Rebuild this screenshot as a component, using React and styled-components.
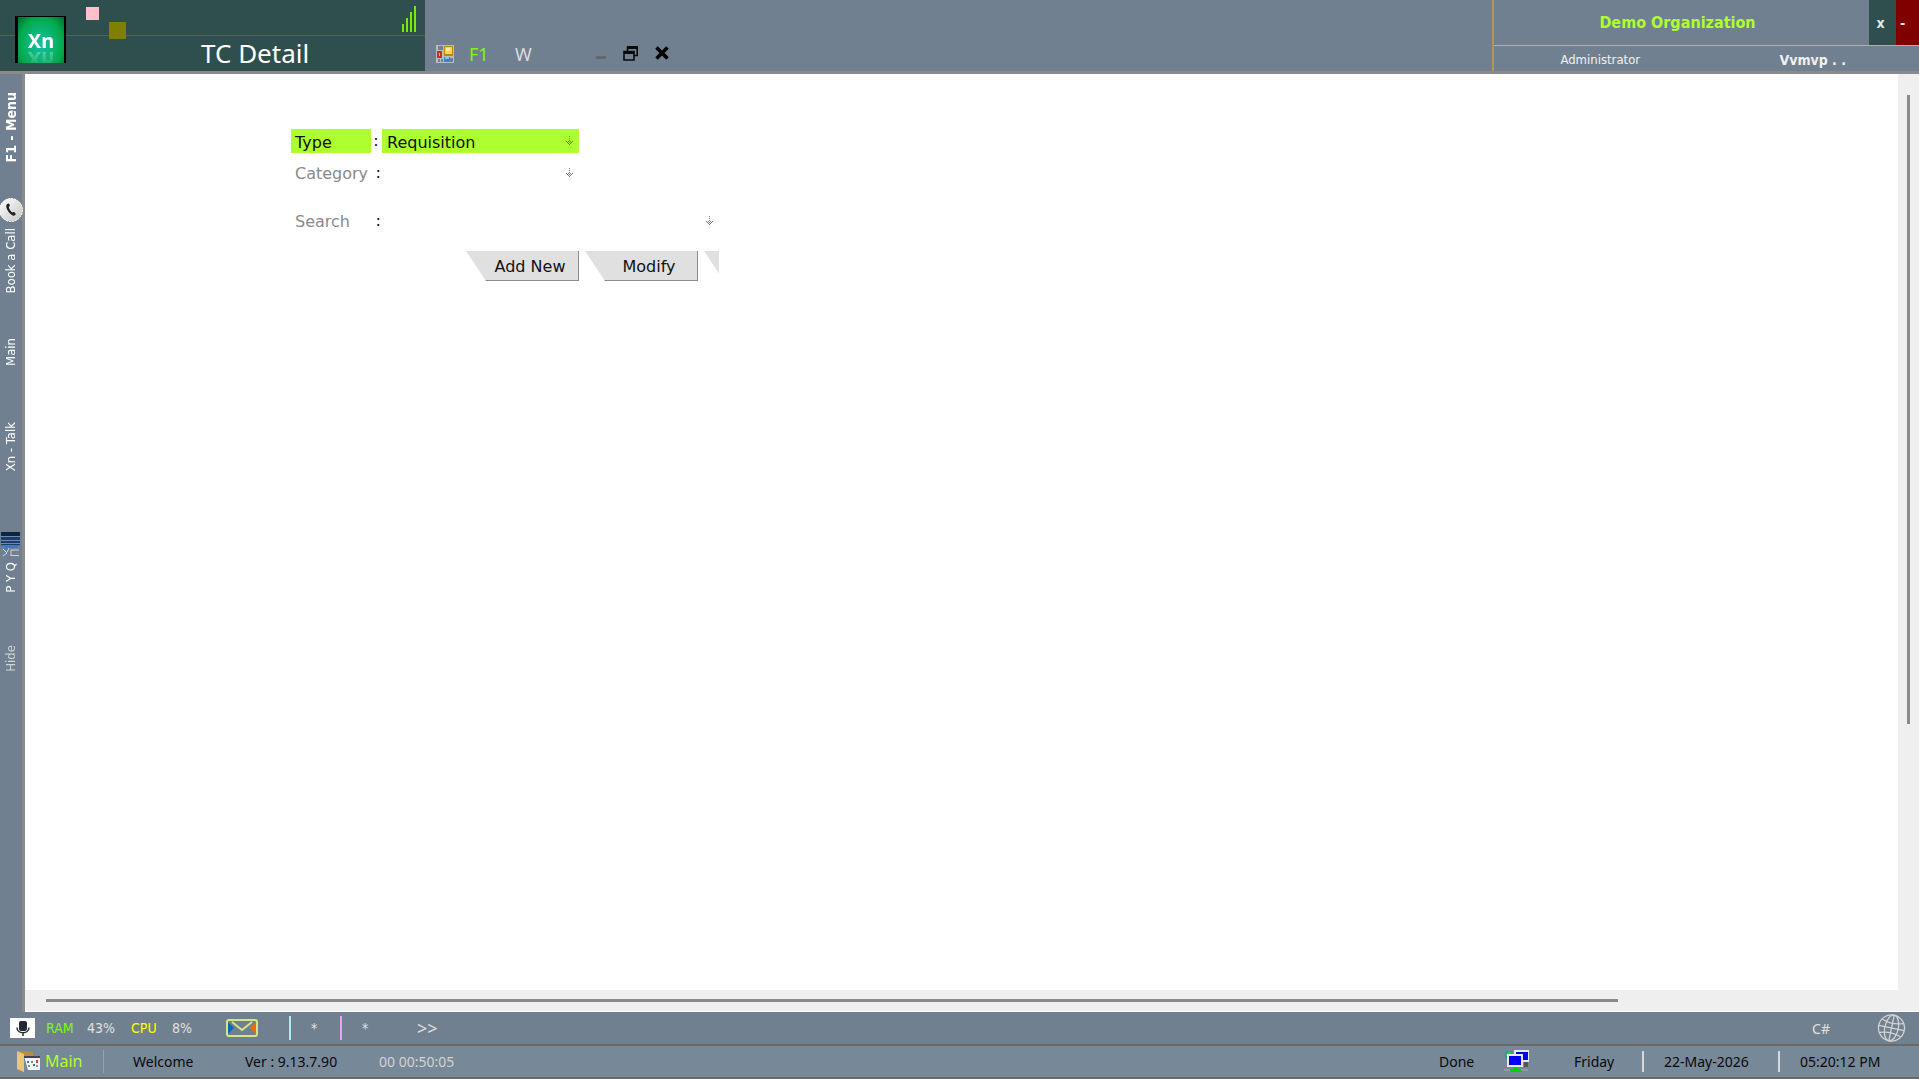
import { useState } from "react";
import styled, { createGlobalStyle, css } from "styled-components";

const UI = `"DejaVu Sans Condensed", "DejaVu Sans", sans-serif`;
const WIDE = `"DejaVu Sans", sans-serif`;
const SOFT = `"Noto Sans", "Open Sans", sans-serif`;

function Arrow() {
	return (
		<svg width='7' height='10' viewBox='0 0 7 10' fill='#777' shapeRendering='crispEdges' aria-hidden='true'>
			<path d='M3 0h1v1H3zM3 2h1v1H3zM3 4h1v1H3zM0 5h1v1H0zM2 5h1v1H2zM4 5h1v1H4zM6 5h1v1H6zM1 6h1v1H1zM3 6h1v1H3zM5 6h1v1H5zM2 7h1v1H2zM4 7h1v1H4zM3 8h1v1H3z' />
		</svg>
	);
}

function Squares() {
	return (
		<svg width='42' height='34' viewBox='0 0 42 34' aria-hidden='true'>
			<rect x='0' y='0' width='13' height='13' fill='#ffc0cb' />
			<rect x='23' y='15' width='17' height='17' fill='#808000' />
		</svg>
	);
}

function Signal() {
	return (
		<svg width='14' height='26' viewBox='0 0 14 26' fill='#7cfc00' aria-hidden='true'>
			<path d='M0 18h2v8H0zM4 12h2v14H4zM8 6h2v20H8zM12 0h2v26h-2z' opacity='0.9' />
		</svg>
	);
}

function FormIcon() {
	return (
		<svg width='18' height='18' viewBox='0 0 18 18' aria-hidden='true'>
			<rect width='18' height='18' fill='#b9bcc0' />
			<path d='M2 1h5v4H2zM2 14h2v3H2zM5 14h2v3H5zM14 13h3v4h-3z' fill='#708090' />
			<rect x='1' y='6' width='5' height='7' fill='#c32f26' />
			<rect x='3' y='8' width='1' height='3' fill='#f6b3a5' />
			<rect x='8' y='1' width='9' height='10' fill='#b88900' />
			<rect x='9' y='2' width='7' height='7' fill='#ffd34d' />
			<rect x='10' y='3' width='4' height='3' fill='#ffeaa0' />
			<rect x='8' y='12' width='6' height='5' fill='#3b7de0' />
			<rect x='9' y='12' width='4' height='2' fill='#90bcf8' />
		</svg>
	);
}

function RestoreIcon() {
	return (
		<svg width='15' height='15' viewBox='0 0 15 15' fill='none' stroke='#0a0a0a' strokeWidth='1.6' aria-hidden='true'>
			<path d='M4.500 5V1.500h9.700v8H11' />
			<path d='M4 1.500h11M1 6.500h10.500' strokeWidth='3' />
			<path d='M1 5.500h10v8.500H1z' />
		</svg>
	);
}

function CrossIcon() {
	return (
		<svg width='14' height='14' viewBox='0 0 14 14' stroke='#000' strokeWidth='3.600' aria-hidden='true'>
			<path d='M1.500 1.500l11 11M12.500 1.500l-11 11' />
		</svg>
	);
}

function PhoneIcon() {
	return (
		<svg width='23' height='26' viewBox='0 0 23 26' aria-hidden='true'>
			<defs>
				<linearGradient id='dial' x1='0' y1='0' x2='1' y2='1'>
					<stop offset='0' stopColor='#fff' />
					<stop offset='1' stopColor='#c4c4c4' />
				</linearGradient>
			</defs>
			<circle cx='11' cy='13' r='11.500' fill='url(#dial)' stroke='#fff' strokeDasharray='2 1' />
			<path d='M7 7.200c1.200-1 2-.6 2.600.4.500 1 .2 1.700-.8 2.500.6 2.300 1.600 4.100 3.300 5.400 1.100-.6 1.900-.5 2.900.3 1 .9.900 1.600 0 2.400-1.300 1.100-3.300.1-5.200-1.900C7.300 13.700 5 9 7 7.200z' fill='#222' />
		</svg>
	);
}

function StackIcon() {
	return (
		<svg width='22' height='25' viewBox='0 0 22 25' aria-hidden='true'>
			<rect x='1' y='0' width='19' height='14' rx='2' fill='#1d3c6b' />
			<rect x='1' y='0' width='19' height='4' rx='1' fill='#10233f' />
			<path d='M1 4.500h19M1 8.500h19M1 11.500h19' stroke='#6c8ab0' />
			<path d='M1 13h19l-4 3H6z' fill='#3d79c4' />
			<path d='M4 16h5l-2 4z' fill='#3d79c4' />
			<path d='M3 17l4 4-4 3M7 20l2-4M11 24V18h8M11 23.500h8' stroke='#c7d6e6' fill='none' />
		</svg>
	);
}

function MicIcon() {
	return (
		<svg width='25' height='20' viewBox='0 0 25 20' aria-hidden='true'>
			<rect width='25' height='20' fill='#fff' />
			<rect x='9' y='3' width='8' height='10' rx='2' fill='#222b33' />
			<path d='M7 9.500c0 7 12 7 12 0M13 15v3' fill='none' stroke='#222b33' strokeWidth='1.500' />
		</svg>
	);
}

function MailIcon() {
	return (
		<svg width='32' height='18' viewBox='0 0 32 18' aria-hidden='true'>
			<path d='M2 3l6 6-6 6z' fill='#0a66b8' />
			<path d='M30 3l-6 6 6 6z' fill='#f06a00' />
			<rect x='1' y='1' width='30' height='16' rx='2' fill='none' stroke='#d3e588' strokeWidth='2' />
			<path d='M6 3l10 8 10-8' fill='none' stroke='#d3e588' strokeWidth='2' />
		</svg>
	);
}

function GlobeIcon() {
	return (
		<svg width='29' height='30' viewBox='0 0 30 30' fill='none' stroke='#d3d3d3' strokeWidth='1.300' aria-hidden='true'>
			<g transform='rotate(12 15 15)'>
				<circle cx='15' cy='15' r='13.500' />
				<ellipse cx='15' cy='15' rx='7' ry='13.500' />
				<path d='M15 1.500v27M1.500 15h27M4 8q11 4 22 0M4 22q11-4 22 0' />
			</g>
		</svg>
	);
}

function FolderIcon() {
	return (
		<svg width='25' height='23' viewBox='0 0 25 23' aria-hidden='true'>
			<path d='M1 2l5-1 11 1v5H7v14L1 19z' fill='#b98c42' />
			<path d='M1 1l7 3v18l-7-3z' fill='#eac67c' />
			<path d='M8 6h16v14H12z' fill='#f2f4f7' />
			<path d='M8 6h16v2H8z' fill='#39465e' />
			<path d='M11 11h2v2h-2zM17 14h2v2h-2z' fill='#3b73c9' />
			<path d='M15 11h2v2h-2zM12 15h2v2h-2z' fill='#5fa35a' />
			<path d='M20 10h2v3h-2z' fill='#d04343' />
			<path d='M20 15h2v2h-2z' fill='#8a96a8' />
		</svg>
	);
}

function NetworkIcon() {
	return (
		<svg width='25' height='23' viewBox='0 0 25 23' aria-hidden='true'>
			<circle cx='5' cy='5' r='4' fill='#13a08b' />
			<path d='M1 5l4-4 3 2-4 4z' fill='#1fd15a' />
			<rect x='10' y='0' width='15' height='12' fill='#e8e8e8' />
			<rect x='12' y='2' width='12' height='8' fill='#0000f5' />
			<path d='M20 12h4v5h-4z' fill='#555' />
			<rect x='3' y='4' width='16' height='13' fill='#e8e8e8' />
			<rect x='5' y='6' width='12' height='9' fill='#0000f5' />
			<path d='M0 19h24v2H0z' fill='#999' />
			<path d='M9 17h5v2h3v3H6v-3h3z' fill='#00d000' />
		</svg>
	);
}

const sideItems = [
	{ label: "F1 - Menu", space: 105, bold: true },
	{ label: "Book a Call", space: 141, icon: <PhoneIcon /> },
	{ label: "Main", space: 84 },
	{ label: "Xn - Talk", space: 110 },
	{ label: "P Y Q", space: 113, icon: <StackIcon /> },
	{ label: "Hide", space: 72, dim: true },
];

export default function App() {
	const [type, setType] = useState("Requisition");
	const [category, setCategory] = useState("");
	const [search, setSearch] = useState("");

	return (
		<Page>
			<GlobalStyle />
			<Header>
				<Brand>
					<Logo>
						<LogoText>Xn</LogoText>
					</Logo>
					<Squares />
					<Title>TC Detail</Title>
					<SignalBox>
						<Signal />
					</SignalBox>
				</Brand>
				<Tools>
					<FormIcon />
					<ToolButton $color='#7cfc00'>F1</ToolButton>
					<ToolButton $color='#dcdcdc'>W</ToolButton>
					<WindowButtons>
						<IconButton aria-label='Minimize'>
							<Dash />
						</IconButton>
						<IconButton aria-label='Restore'>
							<RestoreIcon />
						</IconButton>
						<IconButton aria-label='Close'>
							<CrossIcon />
						</IconButton>
					</WindowButtons>
				</Tools>
				<Account>
					<Organization>
						<OrgName>Demo Organization</OrgName>
						<CornerButton $width={27} $color='#2f4f4f'>x</CornerButton>
						<CornerButton $width={23} $color='#800000' $left>-</CornerButton>
					</Organization>
					<UserRow>
						<UserRole>Administrator</UserRole>
						<UserName>Vvmvp . .</UserName>
					</UserRow>
				</Account>
			</Header>

			<Body>
				<Sidebar>
					{sideItems.map((item) => (
						<SideButton key={item.label} $space={item.space} $bold={item.bold} $dim={item.dim}>
							{item.icon}
							<SideText>{item.label}</SideText>
						</SideButton>
					))}
				</Sidebar>
				<Workspace>
					<Form onSubmit={(event) => event.preventDefault()}>
						<Row>
							<Label htmlFor='type' $active>Type</Label>
							<Colon $active>:</Colon>
							<Field $active>
								<Select id='type' value={type} onChange={(e) => setType(e.target.value)}>
									<option>Requisition</option>
								</Select>
								<Arrow />
							</Field>
						</Row>
						<Row $space={8}>
							<Label htmlFor='category'>Category</Label>
							<Colon>:</Colon>
							<Field>
								<Select id='category' value={category} onChange={(e) => setCategory(e.target.value)}>
									<option value=''></option>
								</Select>
								<Arrow />
							</Field>
						</Row>
						<Row $space={24}>
							<Label htmlFor='search'>Search</Label>
							<Colon>:</Colon>
							<Field $long>
								<Input id='search' value={search} onChange={(e) => setSearch(e.target.value)} />
								<Arrow />
							</Field>
						</Row>
						<Actions>
							<SlantButton>Add New</SlantButton>
							<SlantButton>Modify</SlantButton>
							<SlantButton aria-label='More' />
						</Actions>
					</Form>
					<TrackY>
						<ThumbY />
					</TrackY>
					<TrackX>
						<ThumbX />
					</TrackX>
				</Workspace>
			</Body>

			<StatusBar>
				<MicIcon />
				<Usage>
					<Stat $color='#7cfc00' $width={41}>RAM</Stat>
					<Stat $width={44}>43%</Stat>
					<Stat $color='#ffff00' $width={41}>CPU</Stat>
					<Stat $width={54}>8%</Stat>
				</Usage>
				<MailIcon />
				<Markers>
					<Marker $color='#afeeee'>*</Marker>
					<Marker $color='#ee9fee'>*</Marker>
					<More>&gt;&gt;</More>
				</Markers>
				<Language>C#</Language>
				<GlobeIcon />
			</StatusBar>

			<InfoBar>
				<MainLink href='#main'>
					<FolderIcon />
					Main
				</MainLink>
				<Info $width={112}>Welcome</Info>
				<Info $width={134}>Ver : 9.13.7.90</Info>
				<Info $color='#d3d3d3'>00 00:50:05</Info>
				<Spacer />
				<Info $width={65}>Done</Info>
				<NetworkIcon />
				<DayCell $width={113}>Friday</DayCell>
				<DateCell $width={136}>22-May-2026</DateCell>
				<DateCell $width={141}>05:20:12 PM</DateCell>
			</InfoBar>
		</Page>
	);
}

const GlobalStyle = createGlobalStyle`
	* {
		box-sizing: border-box;
	}
	body {
		margin: 0;
		background-color: #708090;
		font-family: ${UI};
	}
	button, input, select {
		font: inherit;
		color: inherit;
		border: none;
		background: none;
		padding: 0;
		margin: 0;
		outline: none;
	}
	svg {
		display: block;
		flex-shrink: 0;
	}
`;

const Page = styled.div`
	display: flex;
	flex-direction: column;
	min-height: 100vh;
`;

const Header = styled.header`
	display: flex;
	height: 74px;
	border-bottom: 3px solid #8a8a8a;
`;

const Brand = styled.div`
	display: flex;
	align-items: flex-start;
	width: 425px;
	padding: 0 9px 0 15px;
	background: linear-gradient(#556b2f, #556b2f) 0 35px / 100% 1px no-repeat #2f4f4f;

	& > svg {
		margin-top: 7px;
	}
`;

const Logo = styled.div`
	width: 51px;
	height: 47px;
	margin: 16px 20px 0 0;
	padding-top: 12px;
	border: solid #000;
	border-width: 1px 2px 0 3px;
	background: radial-gradient(ellipse at 50% 60%, #16bfa4 0%, #08b46c 45%, #04a84a 68%, #036a30 100%);
	overflow: hidden;
`;

const LogoText = styled.div`
	height: 24px;
	font-family: ${SOFT};
	font-size: 20px;
	font-weight: 700;
	line-height: 24px;
	text-align: center;
	color: #fff;
	-webkit-box-reflect: below -6px linear-gradient(transparent 20%, rgba(255, 255, 255, 0.4));
`;

const Title = styled.h1`
	flex: 1;
	margin: 36px 0 0 73px;
	font-family: ${SOFT};
	font-size: 26px;
	font-weight: 400;
	line-height: 34px;
	color: #fff;
	white-space: nowrap;
`;

const SignalBox = styled.div`
	padding-top: 6px;
`;

const Tools = styled.div`
	flex: 1;
	display: flex;
	align-items: flex-end;
	padding: 0 0 8px 11px;
`;

const ToolButton = styled.button`
	width: 46px;
	padding-left: 15px;
	font-family: ${SOFT};
	font-size: 18px;
	line-height: 18px;
	text-align: left;
	color: ${(props) => props.$color};
`;

const WindowButtons = styled.div`
	display: flex;
	align-items: center;
	gap: 17px;
	margin-left: 50px;
	height: 20px;
`;

const IconButton = styled.button`
	display: flex;
`;

const Dash = styled.span`
	width: 10px;
	height: 3px;
	margin-top: 8px;
	background-color: #64676b;
`;

const Account = styled.div`
	width: 427px;
	border-left: 2px solid #b8954a;
`;

const Organization = styled.div`
	display: flex;
	height: 46px;
	border-bottom: 1px solid #b0b0b0;
`;

const OrgName = styled.div`
	flex: 1;
	padding-right: 8px;
	font-size: 16px;
	font-weight: 700;
	line-height: 46px;
	text-align: center;
	color: #adff2f;
`;

const CornerButton = styled.button`
	width: ${(props) => props.$width}px;
	padding: ${(props) => (props.$left ? "0 0 0 4px" : "0 4px 0 0")};
	background-color: ${(props) => props.$color};
	font-size: 14px;
	font-weight: 700;
	text-align: ${(props) => (props.$left ? "left" : "center")};
	color: #e8e8e8;
`;

const UserRow = styled.div`
	display: flex;
	line-height: 28px;
	color: #f0f0f0;
`;

const UserRole = styled.div`
	flex: 1;
	font-size: 13px;
	text-align: center;
`;

const UserName = styled.div`
	flex: 1;
	font-size: 14px;
	font-weight: 700;
	text-align: center;
`;

const Body = styled.div`
	flex: 1;
	display: flex;
`;

const Sidebar = styled.nav`
	display: flex;
	flex-direction: column;
	width: 25px;
	padding-top: 18px;
	border-right: 3px solid #8a8a8a;
`;

const SideButton = styled.button`
	display: flex;
	flex-direction: column;
	align-items: center;
	justify-content: flex-start;
	gap: 5px;
	width: 22px;
	height: ${(props) => props.$space}px;
	font-size: ${(props) => (props.$bold ? 14 : 13)}px;
	line-height: 22px;
	color: ${(props) => (props.$dim ? "#d3d3d3" : "#fff")};
	font-weight: ${(props) => (props.$bold ? 700 : 400)};
`;

const SideText = styled.span`
	writing-mode: vertical-rl;
	transform: rotate(180deg);
	white-space: nowrap;
`;

const Workspace = styled.main`
	flex: 1;
	display: grid;
	grid-template-columns: 1fr 21px;
	grid-template-rows: 1fr 21px;
	background-color: #efefef;
	border-bottom: 1px solid #fff;
`;

const Form = styled.form`
	padding: 55px 0 0 266px;
	background-color: #fff;
	font-family: ${WIDE};
	font-size: 16px;
	color: #111;
`;

const Row = styled.div`
	display: flex;
	height: 24px;
	line-height: 24px;
	margin-top: ${(props) => props.$space || 0}px;
`;

const Label = styled.label`
	width: 80px;
	padding: ${(props) => (props.$active ? 2 : 1)}px 0 0 4px;
	color: ${(props) => (props.$active ? "#111" : "#8a8a8a")};
	background-color: ${(props) => (props.$active ? "#adff2f" : "transparent")};
`;

const Colon = styled.span`
	width: 11px;
	padding-right: 1px;
	text-align: ${(props) => (props.$active ? "center" : "right")};
`;

const Field = styled.div`
	display: flex;
	align-items: center;
	width: ${(props) => (props.$long ? 338 : 197)}px;
	padding: ${(props) => (props.$long ? "0 7px 0 5px" : "0 6px 0 5px")};
	background-color: ${(props) => (props.$active ? "#adff2f" : "transparent")};
`;

const fieldText = css`
	flex: 1;
	min-width: 0;
	height: 24px;
	padding-top: 2px;
`;

const Select = styled.select`
	${fieldText}
	appearance: none;
`;

const Input = styled.input`
	${fieldText}
`;

const Actions = styled.div`
	display: flex;
	gap: 6px;
	width: 253px;
	margin: 18px 0 0 175px;
	overflow: hidden;
`;

const SlantButton = styled.button`
	flex-shrink: 0;
	width: 113px;
	height: 30px;
	padding: 2px 0 0 16px;
	background-color: #e0e0e0;
	border-right: 1px solid #8a8a8a;
	border-bottom: 1px solid #8a8a8a;
	clip-path: polygon(0 0, 100% 0, 100% 100%, 20px 100%);
`;

const TrackY = styled.div`
	display: flex;
	justify-content: center;
	padding: 21px 1px 21px 0;
`;

const ThumbY = styled.div`
	width: 3px;
	height: 72%;
	background-color: #8a8a8a;
`;

const TrackX = styled.div`
	display: flex;
	align-items: center;
	padding: 0 24px 0 21px;
`;

const ThumbX = styled.div`
	width: 86%;
	height: 3px;
	background-color: #8a8a8a;
`;

const StatusBar = styled.footer`
	display: flex;
	align-items: center;
	height: 34px;
	padding: 0 13px 0 10px;
	border-bottom: 2px solid #696969;
	color: #e0e0e0;
	font-size: 14px;
`;

const Usage = styled.div`
	display: flex;
	margin-left: 11px;
`;

const Stat = styled.span`
	width: ${(props) => props.$width}px;
	color: ${(props) => props.$color || "inherit"};
`;

const Markers = styled.div`
	flex: 1;
	display: flex;
	margin-left: 31px;
`;

const Marker = styled.span`
	width: 51px;
	padding-left: 20px;
	line-height: 24px;
	border-left: 2px solid ${(props) => props.$color};
`;

const More = styled.button`
	margin-left: 26px;
	font-family: ${SOFT};
	font-size: 18px;
	line-height: 24px;
`;

const Language = styled.span`
	margin-right: 47px;
	font-family: ${SOFT};
`;

const InfoBar = styled.footer`
	display: flex;
	align-items: center;
	height: 33px;
	padding-left: 16px;
	background-color: #778899;
	border-bottom: 2px solid #696969;
	font-family: ${SOFT};
	font-size: 14px;
	line-height: 21px;
	color: #0a0a0a;
`;

const MainLink = styled.a`
	display: flex;
	align-items: center;
	gap: 4px;
	width: 88px;
	margin-right: 29px;
	border-right: 1px solid #a0a0a0;
	font-size: 16px;
	text-decoration: none;
	color: #adff2f;
`;

const Info = styled.span`
	width: ${(props) => (props.$width ? `${props.$width}px` : "auto")};
	color: ${(props) => props.$color || "inherit"};
	white-space: nowrap;
`;

const DayCell = styled(Info)`
	padding-left: 45px;
`;

const DateCell = styled(Info)`
	padding-left: 20px;
	border-left: 2px solid #d8d8d8;
`;

const Spacer = styled.div`
	flex: 1;
`;
